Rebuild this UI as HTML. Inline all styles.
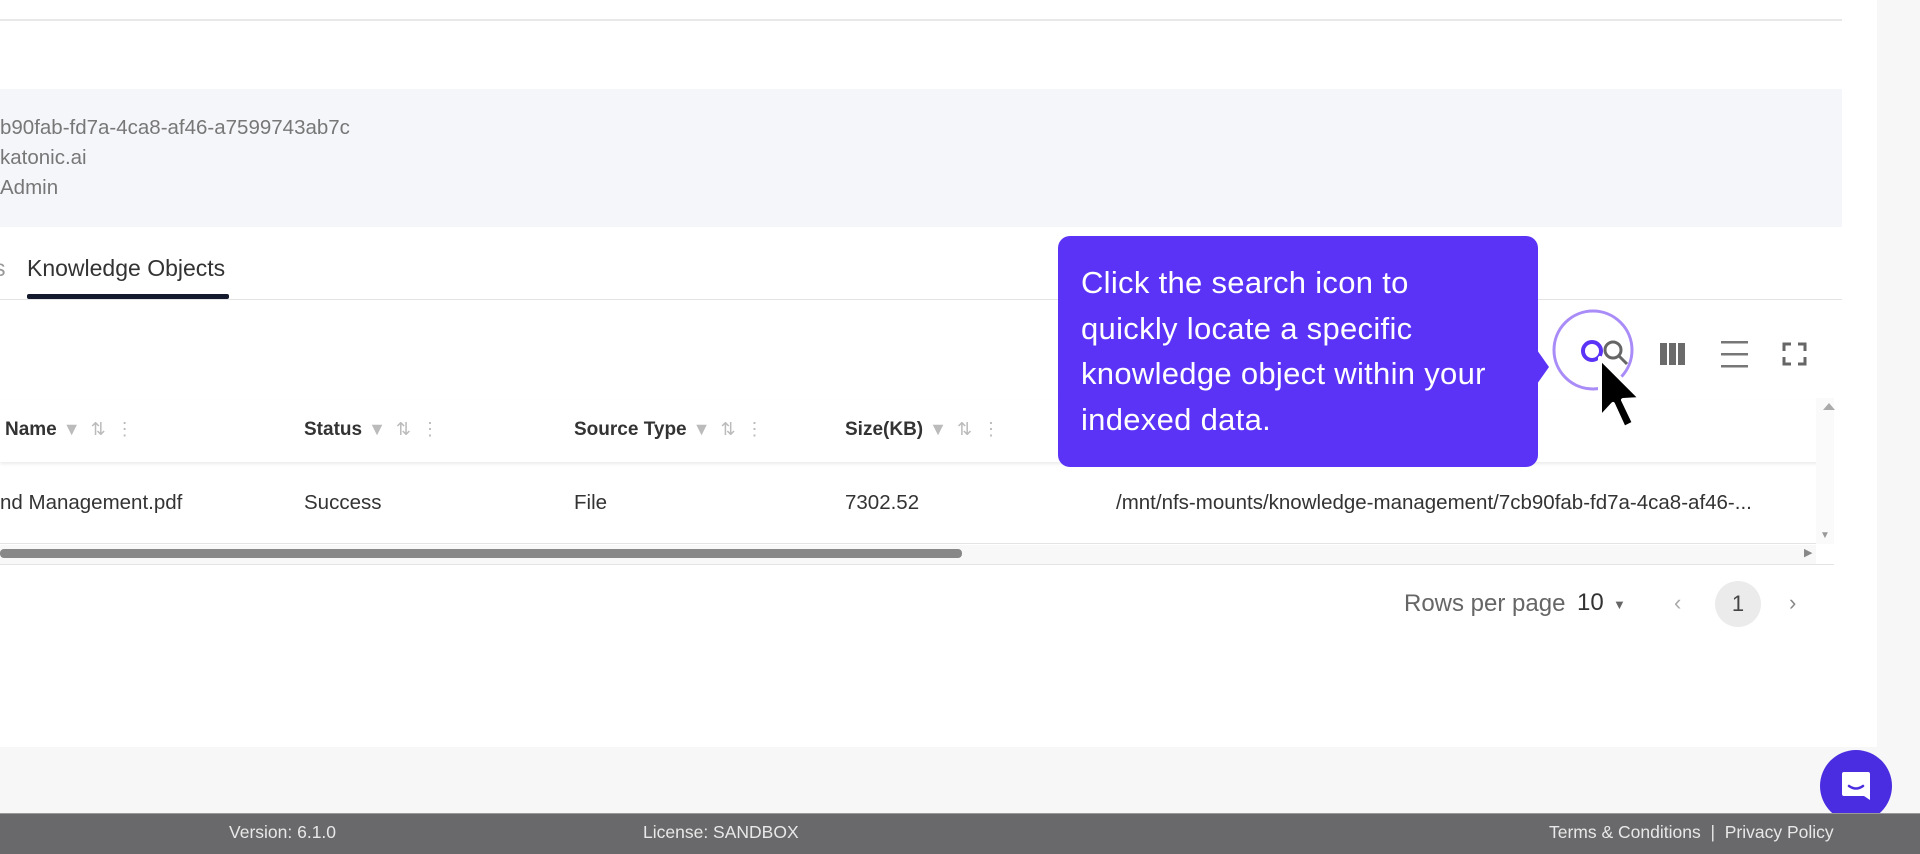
<!DOCTYPE html>
<html><head><meta charset="utf-8"><style>
*{margin:0;padding:0;box-sizing:border-box}
body{width:1920px;height:854px;overflow:hidden;background:#f7f7f7;font-family:"Liberation Sans",sans-serif;position:relative}
.abs{position:absolute}
.t{white-space:nowrap}
.ic{color:#bbb;font-weight:normal;font-size:18px;margin-left:6px}
</style></head><body>
<div class="abs" style="left:0;top:0;width:1877px;height:747px;background:#fff"></div>
<div class="abs" style="left:0;top:19px;width:1842px;height:2px;background:#e8e8e8"></div>
<div class="abs" style="left:0;top:89px;width:1842px;height:138px;background:#f5f6fa"></div>
<div class="abs t" style="left:0;top:116px;font-size:20.5px;color:#777">b90fab-fd7a-4ca8-af46-a7599743ab7c</div>
<div class="abs t" style="left:0;top:146px;font-size:20.5px;color:#777">katonic.ai</div>
<div class="abs t" style="left:0;top:176px;font-size:20.5px;color:#777">Admin</div>
<div class="abs t" style="left:-6px;top:255px;font-size:23px;color:#999">s</div>
<div class="abs t" style="left:27px;top:255px;font-size:23px;color:#333">Knowledge Objects</div>
<div class="abs" style="left:27px;top:294px;width:202px;height:5px;background:#141a2e;border-radius:2px"></div>
<div class="abs" style="left:0;top:299px;width:1842px;height:1px;background:#e4e4e4"></div>

<!-- table -->
<div class="abs" style="left:0;top:400px;width:1820px;height:62px;background:#fff;box-shadow:0 2px 3px rgba(0,0,0,.08)"></div>
<div class="abs t" style="left:5px;top:419px;font-size:19px;font-weight:bold;color:#333">Name<span class="ic">&#9660;&nbsp; ⇅&nbsp; ⋮</span></div>
<div class="abs t" style="left:304px;top:419px;font-size:19px;font-weight:bold;color:#333">Status<span class="ic">&#9660;&nbsp; ⇅&nbsp; ⋮</span></div>
<div class="abs t" style="left:574px;top:419px;font-size:19px;font-weight:bold;color:#333">Source Type<span class="ic">&#9660;&nbsp; ⇅&nbsp; ⋮</span></div>
<div class="abs t" style="left:845px;top:419px;font-size:19px;font-weight:bold;color:#333">Size(KB)<span class="ic">&#9660;&nbsp; ⇅&nbsp; ⋮</span></div>
<div class="abs t" style="left:0;top:491px;font-size:20.5px;color:#333">nd Management.pdf</div>
<div class="abs t" style="left:304px;top:491px;font-size:20.5px;color:#333">Success</div>
<div class="abs t" style="left:574px;top:491px;font-size:20.5px;color:#333">File</div>
<div class="abs t" style="left:845px;top:491px;font-size:20.5px;color:#333">7302.52</div>
<div class="abs t" style="left:1116px;top:491px;font-size:20.5px;color:#333">/mnt/nfs-mounts/knowledge-management/7cb90fab-fd7a-4ca8-af46-...</div>
<div class="abs" style="left:1816px;top:398px;width:18px;height:146px;background:#fafafa"></div>
<div class="abs" style="left:1820px;top:530px;color:#999;font-size:10px">&#9660;</div>
<div class="abs" style="left:0;top:543px;width:1816px;height:1px;background:#e4e4e4"></div>
<div class="abs" style="left:0;top:545px;width:1816px;height:19px;background:#f8f8f8"></div>
<div class="abs" style="left:0;top:549px;width:962px;height:9px;background:#888;border-radius:4px"></div>
<div class="abs" style="left:1804px;top:546px;color:#888;font-size:11px">&#9654;</div>
<div class="abs" style="left:0;top:564px;width:1834px;height:1px;background:#e4e4e4"></div>

<!-- toolbar icons -->
<svg class="abs" style="left:1540px;top:300px" width="300" height="140" viewBox="0 0 300 140">
<circle cx="53" cy="50" r="39" fill="none" stroke="#a98cf7" stroke-width="3"/>
<circle cx="73" cy="50" r="8" fill="none" stroke="#666" stroke-width="3"/>
<line x1="79" y1="56" x2="87" y2="64" stroke="#666" stroke-width="3"/>
<circle cx="52" cy="51" r="9" fill="none" stroke="#5b33f6" stroke-width="4"/>
<rect x="120" y="43" width="7" height="22" fill="#6b6b6b"/><rect x="129" y="43" width="7" height="22" fill="#6b6b6b"/><rect x="138" y="43" width="7" height="22" fill="#6b6b6b"/>
<rect x="181" y="41" width="27" height="2.5" fill="#777"/><rect x="181" y="53" width="27" height="2.5" fill="#777"/><rect x="181" y="65" width="27" height="2.5" fill="#777"/>
<path d="M244 51v-7h7M258 44h7v7M265 57v7h-7M251 64h-7v-7" fill="none" stroke="#666" stroke-width="3"/>
<path d="M60 58 L60 118 L73 104 L84 128 L94 123 L83 100 L101 99 Z" fill="#000" stroke="#fff" stroke-width="4" stroke-linejoin="round"/>
<path d="M283 110 l6 -7 l6 7z" fill="#aaa"/>
</svg>

<!-- pagination -->
<div class="abs t" style="left:1404px;top:590px;font-size:24px;color:#666">Rows per page</div>
<div class="abs t" style="left:1577px;top:589px;font-size:24px;color:#333">10</div>
<div class="abs" style="left:1613px;top:593px;font-size:13px;color:#666;line-height:24px">&#9660;</div>
<div class="abs t" style="left:1674px;top:590px;font-size:22px;color:#aaa">‹</div>
<div class="abs" style="left:1715px;top:581px;width:46px;height:46px;border-radius:50%;background:#ebebeb;text-align:center;line-height:46px;font-size:22px;color:#444">1</div>
<div class="abs t" style="left:1789px;top:590px;font-size:22px;color:#888">›</div>

<!-- tooltip -->
<div class="abs" style="left:1058px;top:236px;width:480px;height:231px;background:#5b33f6;border-radius:12px"></div>
<div class="abs" style="left:1537px;top:350px;width:0;height:0;border-top:17px solid transparent;border-bottom:17px solid transparent;border-left:12px solid #5b33f6"></div>
<div class="abs" style="left:1081px;top:260px;font-size:31px;line-height:45.5px;color:#fff;width:460px;white-space:nowrap;letter-spacing:0.3px">Click the search icon to<br>quickly locate a specific<br>knowledge object within your<br>indexed data.</div>

<!-- chat -->
<div class="abs" style="left:1820px;top:750px;width:72px;height:72px;border-radius:50%;background:#4a2de0"></div>
<svg class="abs" style="left:1838px;top:768px" width="36" height="36" viewBox="0 0 36 36"><path d="M6 4h24a2 2 0 0 1 2 2v26l-6-4H6a2 2 0 0 1-2-2V6a2 2 0 0 1 2-2z" fill="#fff"/><path d="M11 18q7 5 14 0" fill="none" stroke="#4a2de0" stroke-width="2.5" stroke-linecap="round"/></svg>

<!-- footer -->
<div class="abs" style="left:0;top:813px;width:1920px;height:41px;background:#69686a;border-top:1px solid #999"></div>
<div class="abs t" style="left:229px;top:822px;font-size:17.5px;color:#e8e8e8">Version: 6.1.0</div>
<div class="abs t" style="left:643px;top:822px;font-size:17.5px;color:#e8e8e8">License: SANDBOX</div>
<div class="abs t" style="left:1549px;top:822px;font-size:17.5px;color:#e8e8e8">Terms &amp; Conditions &nbsp;| &nbsp;Privacy Policy</div>
</body></html>
